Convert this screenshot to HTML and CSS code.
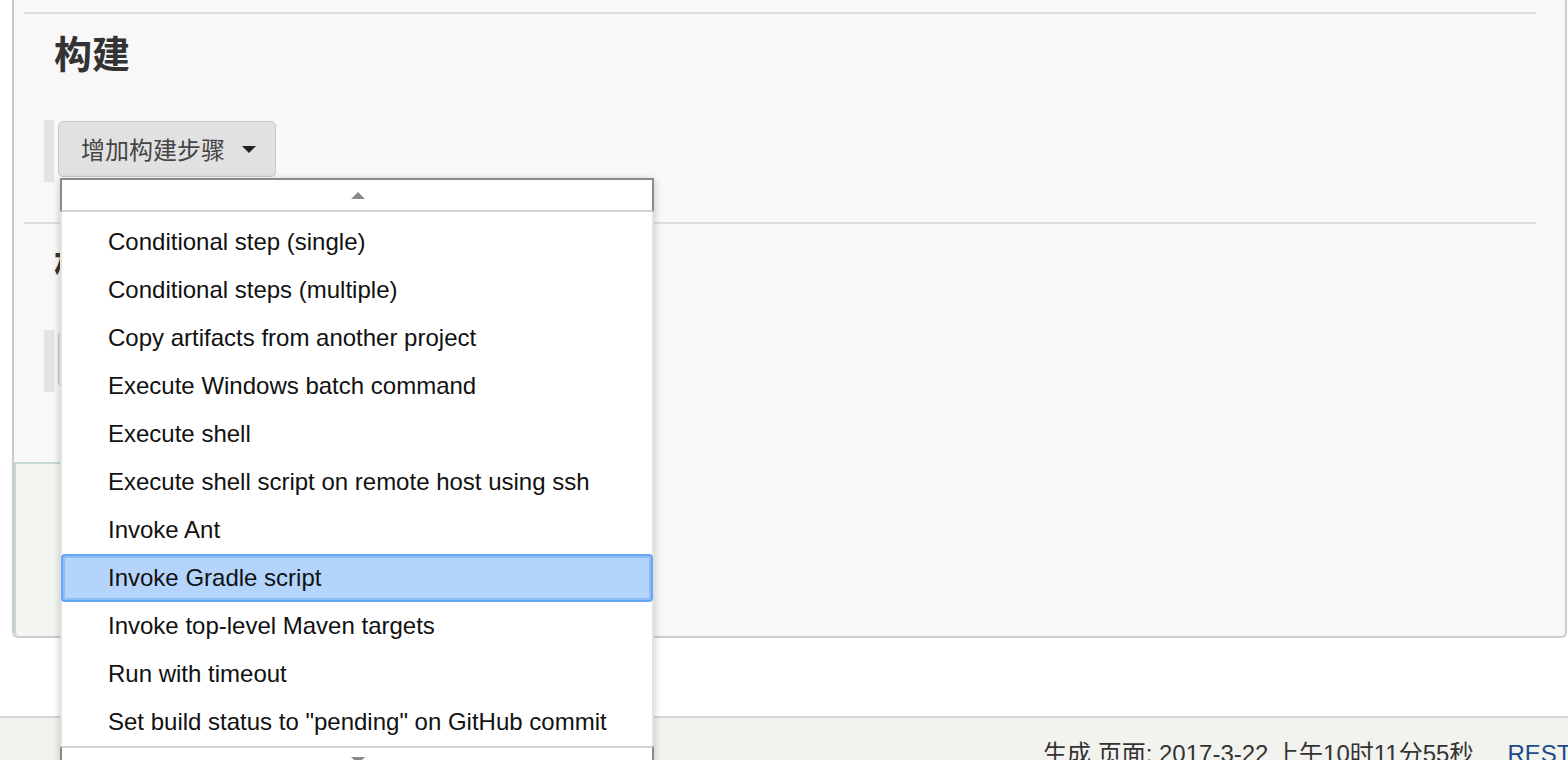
FILE: index.html
```html
<!DOCTYPE html>
<html lang="zh">
<head>
<meta charset="utf-8">
<title>构建</title>
<link rel="stylesheet" href="styles.css">
</head>
<body>
<div class="page">
  <div class="panel">
    <div class="sections">
      <section class="section">
        <h2 class="section-title">构建</h2>
        <div class="group">
          <span class="group-bar"></span>
          <button class="add-btn" type="button">增加构建步骤<span class="caret"></span></button>
        </div>
      </section>
      <section class="section section-last">
        <h2 class="section-title">构建后操作</h2>
        <div class="group">
          <span class="group-bar"></span>
          <button class="add-btn" type="button">增加构建后操作步骤<span class="caret"></span></button>
        </div>
      </section>
    </div>
    <div class="bottom-sticker"></div>
  </div>

  <footer class="footer">
    <span class="footer-text">生成 页面: 2017-3-22 上午10时11分55秒</span>
    <a class="footer-link" href="#">REST API</a>
  </footer>

  <div class="menu">
    <div class="menu-scroll menu-scroll-up"><span class="tri-up"></span></div>
    <ul class="menu-list">
      <li class="menu-item">Conditional step (single)</li>
      <li class="menu-item">Conditional steps (multiple)</li>
      <li class="menu-item">Copy artifacts from another project</li>
      <li class="menu-item">Execute Windows batch command</li>
      <li class="menu-item">Execute shell</li>
      <li class="menu-item">Execute shell script on remote host using ssh</li>
      <li class="menu-item">Invoke Ant</li>
      <li class="menu-item menu-item-active">Invoke Gradle script</li>
      <li class="menu-item">Invoke top-level Maven targets</li>
      <li class="menu-item">Run with timeout</li>
      <li class="menu-item">Set build status to "pending" on GitHub commit</li>
    </ul>
    <div class="menu-scroll menu-scroll-down"><span class="tri-down"></span></div>
  </div>
</div>
</body>
</html>
```

FILE: styles.css
```css
html, body {
  margin: 0;
  padding: 0;
  background: #ffffff;
}

body {
  font-family: "Liberation Sans", Arial, "Noto Sans CJK SC", sans-serif;
  color: #333333;
  height: 760px;
  overflow: hidden;
}

.page {
  position: relative;
  width: 1568px;
  height: 760px;
  overflow: hidden;
}

.panel {
  box-sizing: border-box;
  margin-left: 12px;
  width: 1555px;
  height: 638px;
  background: #f8f8f8;
  border: 2px solid #cccccc;
  border-top: none;
  border-radius: 0 0 6px 6px;
  display: flex;
  flex-direction: column;
  overflow: hidden;
}

.sections {
  padding: 12px 29px 0 10px;
}

.section {
  border-top: 2px solid #dddddd;
  display: flex;
  flex-direction: column;
  align-items: flex-start;
}

.section-last {
  padding-bottom: 30px;
}

.section-title {
  margin: 19px 0 49px 30px;
  height: 38px;
  font-family: "Noto Sans CJK SC", sans-serif;
  font-size: 38px;
  line-height: 38px;
  font-weight: 700;
  color: #333333;
}

.group {
  display: flex;
  align-items: flex-start;
  margin-left: 20px;
  margin-bottom: 40px;
}

.group-bar {
  display: block;
  width: 10px;
  height: 62px;
  background: #e4e4e4;
}

.add-btn {
  box-sizing: border-box;
  margin: 1px 0 0 4px;
  height: 56px;
  padding: 0 19px 2px 22px;
  display: flex;
  align-items: center;
  gap: 17px;
  background: #e1e1e1;
  border: 1px solid #c9c9c9;
  border-radius: 5px;
  font-family: "Noto Sans CJK SC", sans-serif;
  font-size: 24px;
  color: #454545;
}

.caret {
  display: block;
  width: 0;
  height: 0;
  margin-top: 2px;
  border-left: 7.5px solid transparent;
  border-right: 7.5px solid transparent;
  border-top: 7px solid #222222;
}

.bottom-sticker {
  box-sizing: border-box;
  width: 420px;
  height: 174px;
  background: #f3f6f1;
  border-top: 2px solid #c6dacb;
  border-left: 2px solid #c6dacb;
  border-right: 2px solid #c6dacb;
  border-radius: 0 0 0 5px;
}

.footer {
  margin-top: 78px;
  height: 60px;
  background: #f2f2ef;
  border-top: 2px solid #d5d5d3;
  display: flex;
  justify-content: flex-start;
  padding-left: 1043px;
  padding-top: 24px;
  gap: 34px;
  white-space: nowrap;
  font-size: 24px;
  line-height: 24px;
  font-family: "Liberation Sans", Arial, "Noto Sans CJK SC", sans-serif;
}

.footer-text {
  color: #333333;
}

.footer-link {
  color: #204a87;
  text-decoration: none;
}

/* dropdown menu overlay */
.menu {
  position: absolute;
  left: 60px;
  top: 178px;
  width: 594px;
  background: #ffffff;
  box-shadow: 0 2px 8px rgba(0, 0, 0, 0.22);
}

.menu-scroll {
  box-sizing: border-box;
  height: 34px;
  background: #ffffff;
  display: flex;
  justify-content: center;
}

.menu-scroll-up {
  border: 2px solid #8a8a8a;
  border-bottom: 2px solid #d0d0d0;
  align-items: center;
}

.menu-scroll-down {
  border-top: 2px solid #d0d0d0;
  border-left: 2px solid #8a8a8a;
  border-right: 2px solid #8a8a8a;
  align-items: flex-start;
  padding-top: 9px;
}

.tri-up {
  display: block;
  width: 0;
  height: 0;
  margin-left: 1px;
  border-left: 7px solid transparent;
  border-right: 7px solid transparent;
  border-bottom: 7px solid #8a8a8a;
}

.tri-down {
  display: block;
  width: 0;
  height: 0;
  margin-left: 1px;
  border-left: 7px solid transparent;
  border-right: 7px solid transparent;
  border-top: 7px solid #8a8a8a;
}

.menu-list {
  list-style: none;
  margin: 0;
  padding: 6px 0 0 0;
  border-left: 2px solid #e2e2e2;
  border-right: 2px solid #e2e2e2;
}

.menu-item {
  box-sizing: border-box;
  height: 48px;
  line-height: 48px;
  padding-left: 46px;
  font-family: "Liberation Sans", Arial, sans-serif;
  font-size: 24px;
  color: #111111;
  white-space: nowrap;
}

.menu-item-active {
  background: #b4d4fc;
  line-height: 44px;
  border: 2px solid #64a5f4;
  box-shadow: inset 0 0 0 2px #8fbdf7;
  border-radius: 4px;
  padding-left: 45px;
  margin: 0 -1px;
}
```
